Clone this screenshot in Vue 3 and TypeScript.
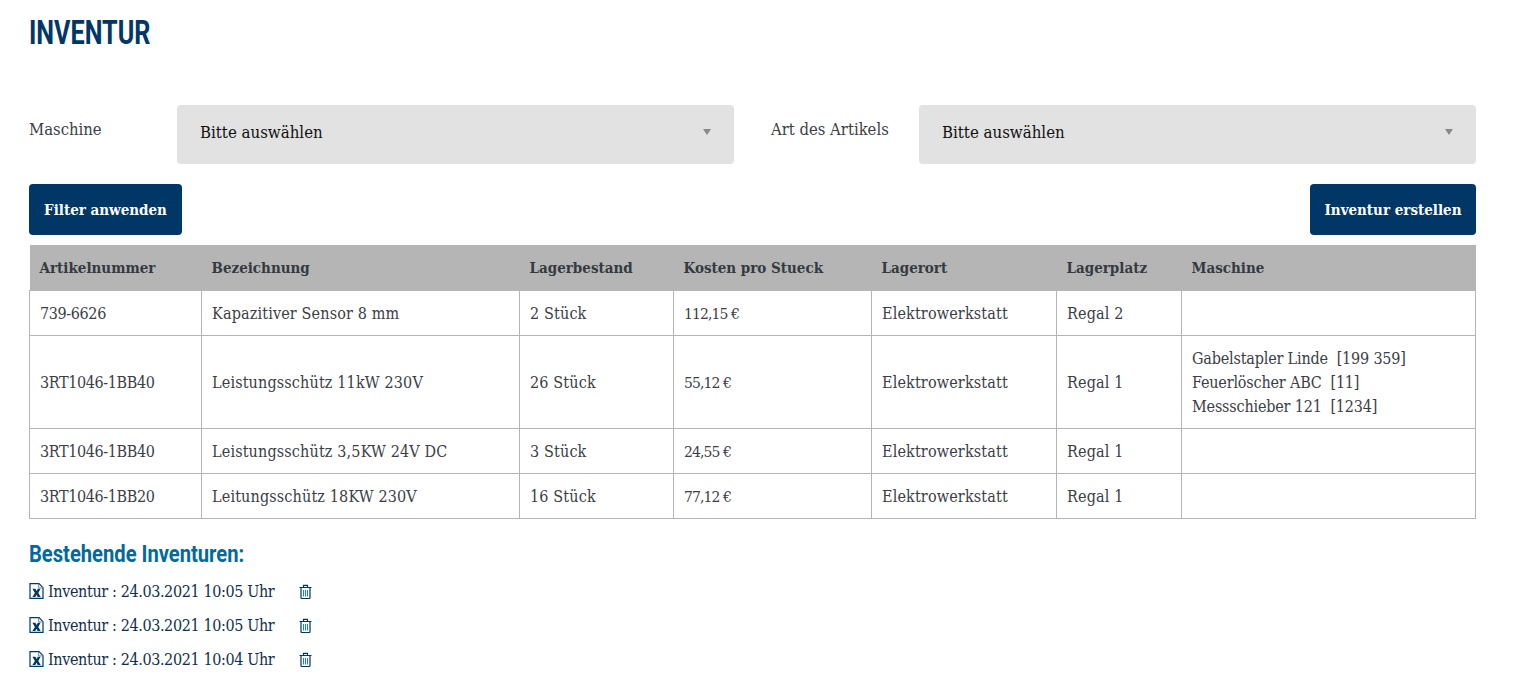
<script setup lang="ts">
interface Row { nr: string; name: string; stock: string; cost: string; ort: string; platz: string; machines: string[] }
const filters = [
  { label: 'Maschine', labelClass: 'lab-a' },
  { label: 'Art des Artikels', labelClass: 'lab-b' },
]
const cols = [
  { t: 'Artikelnummer', w: 172 }, { t: 'Bezeichnung', w: 318 }, { t: 'Lagerbestand', w: 154 },
  { t: 'Kosten pro Stueck', w: 198 }, { t: 'Lagerort', w: 185 }, { t: 'Lagerplatz', w: 125 }, { t: 'Maschine', w: 294 },
]
const rows: Row[] = [
  { nr: '739-6626', name: 'Kapazitiver Sensor 8 mm', stock: '2 Stück', cost: '112,15 €', ort: 'Elektrowerkstatt', platz: 'Regal 2', machines: [] },
  { nr: '3RT1046-1BB40', name: 'Leistungsschütz 11kW 230V', stock: '26 Stück', cost: '55,12 €', ort: 'Elektrowerkstatt', platz: 'Regal 1', machines: ['Gabelstapler Linde\u00a0 [199 359]', 'Feuerlöscher ABC\u00a0 [11]', 'Messschieber 121\u00a0 [1234]'] },
  { nr: '3RT1046-1BB40', name: 'Leistungsschütz 3,5KW 24V DC', stock: '3 Stück', cost: '24,55 €', ort: 'Elektrowerkstatt', platz: 'Regal 1', machines: [] },
  { nr: '3RT1046-1BB20', name: 'Leitungsschütz 18KW 230V', stock: '16 Stück', cost: '77,12 €', ort: 'Elektrowerkstatt', platz: 'Regal 1', machines: [] },
]
const files = ['Inventur : 24.03.2021 10:05 Uhr', 'Inventur : 24.03.2021 10:05 Uhr', 'Inventur : 24.03.2021 10:04 Uhr']
</script>

<template>
  <div class="page">
    <h1 class="title">INVENTUR</h1>
    <div class="filters">
      <template v-for="f in filters" :key="f.label">
        <label class="flabel" :class="f.labelClass">{{ f.label }}</label>
        <div class="select">
          <span>Bitte auswählen</span>
          <i class="caret"></i>
        </div>
      </template>
    </div>
    <div class="actions">
      <button class="btn">Filter anwenden</button>
      <button class="btn">Inventur erstellen</button>
    </div>
    <table class="tbl">
      <colgroup>
        <col v-for="c in cols" :key="c.t" :style="{ width: c.w + 'px' }" />
      </colgroup>
      <thead>
        <tr><th v-for="c in cols" :key="c.t">{{ c.t }}</th></tr>
      </thead>
      <tbody>
        <tr v-for="(r, i) in rows" :key="i">
          <td class="c-nr">{{ r.nr }}</td>
          <td>{{ r.name }}</td>
          <td>{{ r.stock }}</td>
          <td class="c-cost">{{ r.cost }}</td>
          <td>{{ r.ort }}</td>
          <td>{{ r.platz }}</td>
          <td class="c-mach"><div v-for="m in r.machines" :key="m">{{ m }}</div></td>
        </tr>
      </tbody>
    </table>
    <h2 class="sub">Bestehende Inventuren:</h2>
    <ul class="files">
      <li v-for="(f, i) in files" :key="i" class="file">
        <svg class="xls" width="15" height="16" viewBox="0 0 15 16" fill="none">
          <path d="M1 .7h9l4 4v10.600H1z" stroke="#003867" stroke-width="1.2" fill="#fff" />
          <path d="M9.600.9v4h4.200" stroke="#6b8fb0" stroke-width="1" />
          <path d="M3.400 5.800h3l1.200 2.200 1.200-2.200h2.800L9.300 10l2.400 4H8.700l-1.200-2.200L6.300 14H3.400l2.500-4z" fill="#003867" />
        </svg>
        <span class="ftext">{{ f }}</span>
        <svg class="trash" width="13" height="15" viewBox="0 0 13 15" fill="none">
          <path d="M.5 3.500h12M4.500 3.200V1.300h4v1.900" stroke="#003867" stroke-width="1.200" />
          <path d="M2 3.800v9.700a1 1 0 0 0 1 1h7a1 1 0 0 0 1-1V3.800" stroke="#003867" stroke-width="1.200" />
          <path d="M4.500 6v6.500M6.500 6v6.500M8.500 6v6.500" stroke="#2a7fb5" stroke-width="1.100" />
        </svg>
      </li>
    </ul>
  </div>
</template>

<style>
html, body { margin: 0; background: #fff; }
</style>

<style scoped>
.page {
  box-sizing: border-box;
  width: 1538px;
  height: 676px;
  overflow: hidden;
  padding: 0 62px 0 29px;
  font-family: "DejaVu Serif Condensed", "DejaVu Serif", serif;
  font-size: 16px;
  color: #3b4046;
}
.title {
  margin: 0;
  padding-top: 12px;
  height: 105px;
  box-sizing: border-box;
  font-family: "Roboto", sans-serif;
  font-size: 34px;
  line-height: 40px;
  font-weight: 700;
  color: #003767;
  transform: scaleX(0.74);
  transform-origin: left center;
}
.filters { display: flex; align-items: flex-start; height: 59px; }
.flabel { line-height: 24px; padding-top: 13px; box-sizing: border-box; white-space: nowrap; font-size: 16.5px; }
.lab-a { width: 148px; }
.lab-b { width: 185px; padding-left: 37px; }
.select {
  width: 557px;
  height: 59px;
  box-sizing: border-box;
  padding: 0 23px 5px;
  background: #e2e2e2;
  border-radius: 4px;
  color: #111;
  display: flex;
  align-items: center;
  justify-content: space-between;
  font-size: 16.7px;
}
.caret {
  width: 0; height: 0;
  border-left: 4px solid transparent;
  border-right: 4px solid transparent;
  border-top: 6px solid #888;
}
.actions { display: flex; justify-content: space-between; margin-top: 20px; }
.btn {
  height: 51px;
  padding: 0 14.500px;
  border: 0;
  border-radius: 4px;
  background: #003767;
  color: #fff;
  font: 700 15px "DejaVu Serif Condensed", "DejaVu Serif", serif;
}
.btn:first-child { min-width: 153px; }
.tbl {
  margin-top: 10px;
  width: 1446px;
  table-layout: fixed;
  border-collapse: collapse;
}
.tbl th {
  height: 45px;
  padding: 0 10px;
  background: #b5b5b5;
  text-align: left;
  font-size: 15px;
  font-weight: 700;
  color: #343a40;
}
.tbl td {
  height: 44px;
  box-sizing: border-box;
  padding: 11px 10px 9px;
  border: 1px solid #b5b5b5;
  line-height: 24px;
  white-space: nowrap;
  letter-spacing: 0.15px;
}
.tbl td.c-nr { letter-spacing: -0.38px; }
.tbl td.c-cost { font-size: 15.500px; letter-spacing: -0.9px; }
.tbl td.c-mach { letter-spacing: -0.18px; }
.sub {
  margin: 20px 0 0;
  font-family: "Roboto", sans-serif;
  font-size: 24px;
  line-height: 30px;
  font-weight: 700;
  color: #00699d;
  transform: scaleX(0.84);
  transform-origin: left center;
}
.files { list-style: none; margin: 5px 0 0; padding: 0; }
.file { display: flex; align-items: center; height: 34px; color: #12304d; letter-spacing: -0.38px; }
.xls { flex: none; margin-right: 4px; }
.ftext { white-space: nowrap; }
.trash { flex: none; margin-left: 25px; }
</style>
